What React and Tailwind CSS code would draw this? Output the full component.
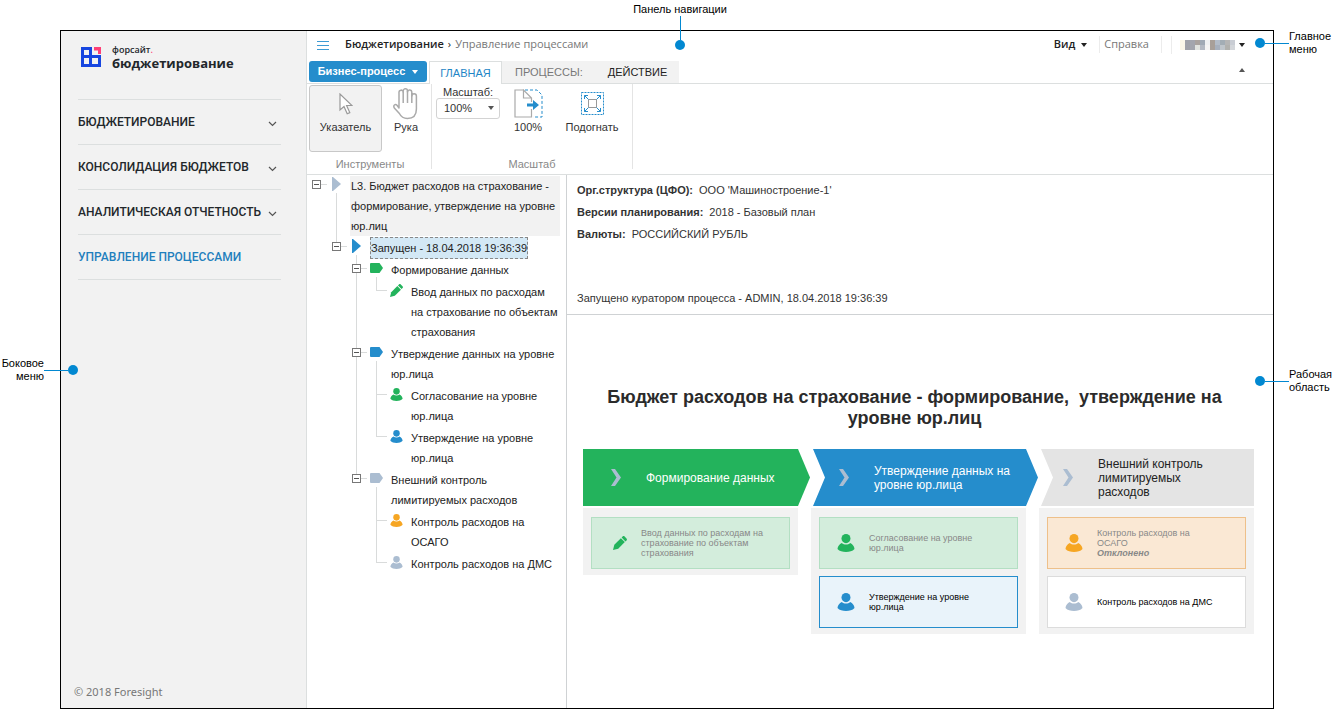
import { useState } from "react";

const NAV = [
  { title: "БЮДЖЕТИРОВАНИЕ", expandable: true },
  { title: "КОНСОЛИДАЦИЯ БЮДЖЕТОВ", expandable: true },
  { title: "АНАЛИТИЧЕСКАЯ ОТЧЕТНОСТЬ", expandable: true },
  { title: "УПРАВЛЕНИЕ ПРОЦЕССАМИ", expandable: false },
];

// guides: "line" / "none" for every ancestor column left of the node's own cell
const TREE = [
  { id: 1, guides: [], own: "toggle", icon: "play", color: "text-[#abbdd1]", text: "L3. Бюджет расходов на страхование - формирование, утверждение на уровне юр.лиц", parent: true, shaded: true, last: true },
  { id: 2, guides: ["none"], own: "toggle", icon: "play", color: "text-[#258dcc]", text: "Запущен - 18.04.2018 19:36:39", parent: true, selected: true, last: true },
  { id: 3, guides: ["none", "none"], own: "toggle", icon: "stage", color: "text-[#23b35c]", text: "Формирование данных", parent: true },
  { id: 4, guides: ["none", "none", "line"], own: "branch", icon: "pencil", color: "text-[#23b35c]", text: "Ввод данных по расходам на страхование по объектам страхования", last: true },
  { id: 5, guides: ["none", "none"], own: "toggle", icon: "stage", color: "text-[#258dcc]", text: "Утверждение данных на уровне юр.лица", parent: true },
  { id: 6, guides: ["none", "none", "line"], own: "branch", icon: "user", color: "text-[#23b35c]", text: "Согласование на уровне юр.лица" },
  { id: 7, guides: ["none", "none", "line"], own: "branch", icon: "user", color: "text-[#258dcc]", text: "Утверждение на уровне юр.лица", last: true },
  { id: 8, guides: ["none", "none"], own: "toggle", icon: "stage", color: "text-[#abbdd1]", text: "Внешний контроль лимитируемых расходов", parent: true, last: true },
  { id: 9, guides: ["none", "none", "none"], own: "branch", icon: "user", color: "text-[#f6a623]", text: "Контроль расходов на ОСАГО" },
  { id: 10, guides: ["none", "none", "none"], own: "branch", icon: "user", color: "text-[#abbdd1]", text: "Контроль расходов на ДМС", last: true },
];

const PARAMS = [
  ["Орг.структура (ЦФО):", "ООО 'Машиностроение-1'"],
  ["Версии планирования:", "2018 - Базовый план"],
  ["Валюты:", "РОССИЙСКИЙ РУБЛЬ"],
];

function Caret({ className = "" }) {
  return (
    <svg width="6" height="4" viewBox="0 0 6 4" className={className} fill="currentColor" aria-hidden="true">
      <path d="M0 0h6L3 4z" />
    </svg>
  );
}

function UserIcon({ size = 13 }) {
  return (
    <svg width={size} height={size} viewBox="0 0 17 18" fill="currentColor" aria-hidden="true">
      <ellipse cx="8.500" cy="4.600" rx="4.500" ry="4.600" />
      <path d="M4.300 8.900c1.200 1 2.600 1.500 4.200 1.500s3-.5 4.200-1.500c2.400 1.100 4.100 3.200 4.300 6.100C15 17.200 12 18 8.500 18S2 17.200 0 15c.2-2.900 1.900-5 4.300-6.100z" />
    </svg>
  );
}

function PencilIcon({ size = 13 }) {
  return (
    <svg width={size} height={size} viewBox="0 0 14 14" fill="currentColor" aria-hidden="true">
      <path d="M0 14l1.300-5.200L7.900 2.200l3.900 3.900-6.600 6.600z" />
      <path d="M8.600 1.500l1-1c.6-.6 1.400-.6 2 0l1.900 1.900c.6.6.6 1.400 0 2l-1 1z" />
    </svg>
  );
}

function NodeIcon({ name }) {
  if (name === "user") return <UserIcon />;
  if (name === "pencil") return <PencilIcon />;
  if (name === "stage") {
    return (
      <svg width="13" height="10" viewBox="0 0 13 10" fill="currentColor" aria-hidden="true">
        <path d="M1 0h8.500L13 5l-3.500 5H1a1 1 0 0 1-1-1V1a1 1 0 0 1 1-1z" />
      </svg>
    );
  }
  return (
    <svg width="9" height="14" viewBox="0 0 9 14" fill="currentColor" aria-hidden="true">
      <path d="M0 0h1l8 7-8 7H0z" />
    </svg>
  );
}

function Logo() {
  return (
    <svg width="20" height="20" viewBox="0 0 20 20" aria-hidden="true">
      <path fill="#1746e0" fillRule="evenodd" d="M0 0h11v8h9v12H0zM3 3v5h5V3zM3 11v6h5v-6zM11 11v6h6v-6z" />
      <path fill="#ff4076" d="M13 0h7v7h-3V3.500h-4z" />
    </svg>
  );
}

function Sidebar() {
  return (
    <aside className="flex w-[246px] shrink-0 flex-col border-r border-[#dcdfdf] bg-[#f2f2f2]">
      <div className="flex h-[68px] items-start gap-[11px] pt-[13px] pl-5">
        <div className="pt-[3px]">
          <Logo />
        </div>
        <div className="font-['Open_Sans',sans-serif] text-[#22272b]">
          <div className="text-[9px] leading-3 font-semibold">
            форсайт<span className="text-[#ff4076]">.</span>
          </div>
          <div className="text-[13px] leading-[14px] font-bold">бюджетирование</div>
        </div>
      </div>
      <nav className="mr-[25px] ml-[17px] border-b border-[#dcdfdf]">
        {NAV.map((item) => (
          <a
            key={item.title}
            href="#"
            className={`flex h-[45px] items-center justify-between border-t border-[#dcdfdf] pr-1 font-[Roboto,sans-serif] text-[12px] font-medium ${
              item.expandable ? "text-[#22272b]" : "text-[#1f7fbd]"
            }`}
          >
            {item.title}
            {item.expandable && (
              <svg width="9" height="6" viewBox="0 0 9 6" fill="none" stroke="#555" strokeWidth="1.200" className="mt-1" aria-hidden="true">
                <path d="M1 1l3.500 3.500L8 1" />
              </svg>
            )}
          </a>
        ))}
      </nav>
      <p className="mt-auto pb-2 pl-[13px] font-['Noto_Sans',sans-serif] text-[11px] leading-4 text-[#777]">© 2018 Foresight</p>
    </aside>
  );
}

// User name is masked with a mosaic
const MOSAIC = [
  ["bg-[#fbf7e8]", "bg-[#a0a2a8]", "bg-[#a3a5ae]", "bg-[#a9a29f]", "bg-[#9fa9b5]", "bg-[#eef0f2]", "bg-[#a89f98]", "bg-[#b3bcc8]", "bg-[#a3adb5]", "bg-[#b5b5b5]", "bg-[#c9cdd4]"],
  ["bg-[#fbf7e8]", "bg-[#a0a2a8]", "bg-[#a3a5ae]", "bg-[#e1e3e0]", "bg-[#b3b9c3]", "bg-[#f4f4f4]", "bg-[#a89f98]", "bg-[#a7b0bd]", "bg-[#bfc5cb]", "bg-[#b1b1ae]", "bg-[#d3d6da]"],
];

function HeaderBar() {
  return (
    <header className="flex h-[30px] items-center pr-7 pb-[3px] pl-[10px] font-['Open_Sans',sans-serif] text-[11px] text-[#222]">
      <button type="button" aria-label="Меню" className="flex w-3 flex-col gap-[3px] pt-[2px]">
        <span className="h-px bg-[#3d9bd4]" />
        <span className="h-px bg-[#3d9bd4]" />
        <span className="h-px bg-[#3d9bd4]" />
      </button>
      <div className="ml-4 flex items-center gap-1">
        <a href="#" className="font-semibold">Бюджетирование</a>
        <span>›</span>
        <span className="text-[#777]">Управление процессами</span>
      </div>
      <div className="ml-auto flex items-center">
        <button type="button" className="flex items-center gap-[6px] pr-3 font-semibold">
          Вид <Caret />
        </button>
        <a href="#" className="border-x border-[#ececec] pr-3 pl-1 text-[#777]">Справка</a>
        <button type="button" aria-label="Пользователь" className="ml-[9px] flex items-center gap-1 border-l border-[#ececec] py-1 pl-2">
          <span className="flex flex-col">
            {MOSAIC.map((row, i) => (
              <span key={i} className="flex">
                {row.map((c, j) => (
                  <span key={j} className={`h-[5px] w-[5px] ${c}`} />
                ))}
              </span>
            ))}
          </span>
          <Caret />
        </button>
      </div>
    </header>
  );
}

function Tabs() {
  return (
    <div className="flex h-[23px] items-stretch border-b border-[#dcdfdf] pl-[2px] text-[11px]">
      <button type="button" className="mb-px flex w-[118px] items-center justify-center gap-[7px] rounded-[3px] bg-[#258dcc] text-[11px] font-bold text-white">
        Бизнес-процесс <Caret />
      </button>
      <div role="tablist" className="ml-[2px] flex">
        <button type="button" role="tab" aria-selected="true" className="-mb-px w-[73px] border-x border-t border-[#dcdfdf] bg-white text-[#1f86c6]">ГЛАВНАЯ</button>
        <button type="button" role="tab" className="bg-[#f2f2f2] px-[13px] text-[#777]">ПРОЦЕССЫ:</button>
        <button type="button" role="tab" className="bg-[#f2f2f2] px-3 text-[#222]">ДЕЙСТВИЕ</button>
      </div>
      <button type="button" aria-label="Свернуть ленту" className="mr-7 ml-auto pb-1 text-[#555]">
        <Caret className="rotate-180" />
      </button>
    </div>
  );
}

function Ribbon() {
  const [zoom, setZoom] = useState("100%");
  return (
    <div className="flex h-[91px] border-b border-[#dcdfdf] text-[11px] text-[#333]">
      <section className="mb-[5px] flex w-[125px] flex-col border-r border-[#e4e4e4] pt-px pl-[2px]">
        <div className="flex">
          <button type="button" className="flex h-[67px] w-[73px] flex-col items-center rounded-[3px] border border-[#c8c8c8] bg-[#f2f2f2] pt-[7px]">
            <svg width="14" height="22" viewBox="0 0 14 22" fill="#fff" stroke="#999" strokeWidth="1.200" aria-hidden="true">
              <path d="M1 1v16l4-3.500 3.200 7.300 2.600-1.200L7.600 12.500H13z" />
            </svg>
            <span className="mt-[6px] leading-3">Указатель</span>
          </button>
          <button type="button" className="flex h-[67px] w-12 flex-col items-center pt-[3px]">
            <svg width="26" height="32" viewBox="0 0 26 32" fill="#fff" stroke="#aaa" strokeWidth="1.500" strokeLinejoin="round" aria-hidden="true">
              <path d="M6 20V4.500a2.100 2.100 0 0 1 4.200-.5V3a2.100 2.100 0 0 1 4.300 0v1a2.100 2.100 0 0 1 4.300.5V8a2.300 2.300 0 0 1 4.600 0v13c0 6-3 9.500-9 9.500-5 0-6.500-2-8-5L1.300 20c-1.500-2.800 1-4.300 2.700-2.700z" />
              <path fill="none" d="M10.200 4v11M14.500 3v12M18.800 5v10" />
            </svg>
            <span className="mt-px leading-3">Рука</span>
          </button>
        </div>
        <h3 className="mt-auto text-center leading-[10px] text-[#888]">Инструменты</h3>
      </section>
      <section className="mb-[5px] flex w-[201px] flex-col border-r border-[#e4e4e4] px-1 pt-[2px]">
        <div className="flex">
          <div className="w-16">
            <label htmlFor="zoom" className="block text-center leading-3">Масштаб:</label>
            <div className="relative">
              <select
                id="zoom"
                value={zoom}
                onChange={(e) => setZoom(e.target.value)}
                className="h-[21px] w-16 appearance-none rounded-[3px] border border-[#d3d3d3] bg-white pl-[7px] text-[11px]"
              >
                <option>50%</option>
                <option>100%</option>
                <option>200%</option>
              </select>
              <Caret className="pointer-events-none absolute top-2 right-[6px] text-[#555]" />
            </div>
          </div>
          <button type="button" className="ml-2 flex w-10 flex-col items-center pt-[3px]">
            <svg width="29" height="29" viewBox="0 0 29 29" fill="none" aria-hidden="true">
              <path stroke="#aaa" strokeWidth="1.200" d="M9.500 1H1v27h16.500v-8M17.500 13V9L9.500 1v8h8" />
              <path stroke="#258dcc" strokeDasharray="3 2" d="M11 1h12l5 5v22H19" />
              <path fill="#258dcc" d="M13 14.500h6V11l6 5-6 5v-3.500h-6z" />
            </svg>
            <span className="mt-[3px] leading-3">100%</span>
          </button>
          <button type="button" className="ml-3 flex w-[64px] flex-col items-center pt-[6px]">
            <svg width="23" height="23" viewBox="0 0 23 23" fill="none" stroke="#258dcc" aria-hidden="true">
              <path strokeDasharray="2 1" d="M.5.5h22v22H.500z" />
              <path stroke="#999" d="M7.500 7.500h8v8h-8z" />
              <path d="M3.500 7V3.500H7M16 3.500h3.500V7M19.500 16v3.500H16M7 19.500H3.500V16M3.500 3.500l4 4M19.500 3.500l-4 4M19.500 19.500l-4-4M3.500 19.500l4-4" />
            </svg>
            <span className="mt-[6px] leading-3">Подогнать</span>
          </button>
        </div>
        <h3 className="mt-auto text-center leading-[10px] text-[#888]">Масштаб</h3>
      </section>
    </div>
  );
}

function OwnCell({ node }) {
  if (node.own === "branch") {
    return (
      <span className="flex w-5 shrink-0 flex-col pl-[9px]">
        <span className="h-[10px] w-[11px] shrink-0 border-b border-l border-[#d9dbdb]" />
        {!node.last && <span className="w-px flex-1 bg-[#d9dbdb]" />}
      </span>
    );
  }
  return (
    <span className="flex w-5 shrink-0 flex-col pl-[5px]">
      <span className={`ml-1 h-[5px] w-px shrink-0 ${node.id > 1 ? "bg-[#d9dbdb]" : ""}`} />
      <span className="flex items-center">
        <button type="button" aria-label="Свернуть" className="flex size-[9px] shrink-0 items-center justify-center border border-[#777] bg-white">
          <span className="h-px w-[5px] bg-[#555]" />
        </button>
        <span className="h-px w-[6px] shrink-0 bg-[#d9dbdb]" />
      </span>
      {!node.last && <span className="ml-1 w-px flex-1 bg-[#d9dbdb]" />}
    </span>
  );
}

function TreeNode({ node }) {
  let box = "my-px px-px";
  if (node.shaded) box = "my-px flex-1 bg-[#f2f2f2] px-px";
  if (node.selected) box = "border border-dashed border-[#888] bg-[#d3e8f5]";
  return (
    <li className="flex">
      {node.guides.map((g, i) => (
        <span key={i} className="flex w-5 shrink-0 pl-[9px]">
          {g === "line" && <span className="w-px bg-[#d9dbdb]" />}
        </span>
      ))}
      <OwnCell node={node} />
      <span className="flex w-5 shrink-0 flex-col">
        <span className={`flex h-[18px] shrink-0 items-center justify-center pr-px ${node.color}`}>
          <NodeIcon name={node.icon} />
        </span>
        {node.parent && <span className="ml-[9px] w-px flex-1 bg-[#d9dbdb]" />}
      </span>
      <span className={`ml-[3px] leading-5 ${box}`}>{node.text}</span>
    </li>
  );
}

function Stage({ title, tone, shape, children }) {
  return (
    <div>
      <div className={`flex h-[57px] items-center text-[12px] leading-[14px] ${tone} ${shape}`}>
        <svg width="10" height="17" viewBox="0 0 10 17" className="shrink-0 fill-[#abbdd1]" aria-hidden="true">
          <path d="M0 0h4L10 8.500 4 17H0l5.500-8.500z" />
        </svg>
        <h3>{title}</h3>
      </div>
      <div className="mt-[2px] flex flex-col gap-[7px] bg-[#f2f2f2] px-2 pt-[9px] pb-[6px]">{children}</div>
    </div>
  );
}

function StepCard({ tone, iconColor, pencil, children }) {
  return (
    <div className={`flex h-[52px] items-center border text-[9px] leading-[10px] ${tone}`}>
      <span className={`flex w-[49px] shrink-0 justify-end pr-[14px] ${iconColor}`}>
        {pencil ? <PencilIcon size={14} /> : <UserIcon size={18} />}
      </span>
      <p className="pr-[26px]">{children}</p>
    </div>
  );
}

function Workspace() {
  return (
    <main className="min-w-0 flex-1">
      <div className="flex h-[140px] flex-col border-b border-[#cfd2d4] pt-1 pl-[10px] text-[11px] leading-[22px] text-[#333]">
        {PARAMS.map(([label, value]) => (
          <p key={label}>
            <b className="mr-[6px]">{label}</b>
            {value}
          </p>
        ))}
        <p className="mt-[42px]">Запущено куратором процесса - ADMIN, 18.04.2018 19:36:39</p>
      </div>
      <div className="pt-[72px] pr-[19px] pl-4">
        <h2 className="pr-7 pl-5 text-center text-[18px] leading-[21px] font-bold text-[#2b2b2b]">
          Бюджет расходов на страхование - формирование,&nbsp; утверждение на уровне юр.лиц
        </h2>
        <div className="mt-5 grid grid-cols-3 items-start gap-[13px]">
          <Stage
            title="Формирование данных"
            tone="bg-[#23b35c] text-white"
            shape="-mr-3 gap-[25px] pr-4 pl-7 [clip-path:polygon(0_0,calc(100%-12px)_0,100%_50%,calc(100%-12px)_100%,0_100%)]"
          >
            <StepCard tone="border-[#b3dfc3] bg-[#d3eddc] text-[#888]" iconColor="text-[#23b35c]" pencil>
              Ввод данных по расходам на страхование по объектам страхования
            </StepCard>
          </Stage>
          <Stage
            title="Утверждение данных на уровне юр.лица"
            tone="bg-[#258dcc] text-white"
            shape="-mr-3 ml-[2px] gap-[25px] pr-4 pl-[26px] [clip-path:polygon(0_0,calc(100%-12px)_0,100%_50%,calc(100%-12px)_100%,0_100%,12px_50%)]"
          >
            <StepCard tone="border-[#b3dfc3] bg-[#d3eddc] text-[#888]" iconColor="text-[#23b35c]">
              Согласование на уровне юр.лица
            </StepCard>
            <StepCard tone="border-[#258dcc] bg-[#e9f3fa] text-black" iconColor="text-[#258dcc]">
              Утверждение на уровне юр.лица
            </StepCard>
          </Stage>
          <Stage
            title="Внешний контроль лимитируемых расходов"
            tone="bg-[#e4e4e4] text-[#222]"
            shape="ml-[2px] gap-[25px] pr-8 pl-[22px] [clip-path:polygon(0_0,100%_0,100%_100%,0_100%,12px_50%)]"
          >
            <StepCard tone="border-[#eec08a] bg-[#fae8d4] text-[#888]" iconColor="text-[#f6a623]">
              Контроль расходов на ОСАГО
              <b className="block italic">Отклонено</b>
            </StepCard>
            <StepCard tone="border-[#dcdcdc] bg-white text-black" iconColor="text-[#abbdd1]">
              Контроль расходов на ДМС
            </StepCard>
          </Stage>
        </div>
      </div>
    </main>
  );
}

function Dot() {
  return <span className="size-[10px] shrink-0 rounded-full bg-[#0288d1]" />;
}

function Callouts() {
  return (
    <div className="text-[11px] leading-[13px] text-black">
      <div className="absolute top-[3px] left-[632px] flex w-24 flex-col items-center">
        <span className="whitespace-nowrap">Панель навигации</span>
        <span className="h-6 w-px bg-[#0288d1]" />
        <Dot />
      </div>
      <div className="absolute top-[357px] left-0 flex items-center">
        <span className="w-[44px] text-right">Боковое меню</span>
        <span className="h-px w-6 bg-[#0288d1]" />
        <Dot />
      </div>
      <div className="absolute top-[30px] right-0 flex items-center">
        <Dot />
        <span className="h-px w-6 bg-[#0288d1]" />
        <span className="w-[46px]">Главное меню</span>
      </div>
      <div className="absolute top-[368px] right-0 flex items-center">
        <Dot />
        <span className="h-px w-6 bg-[#0288d1]" />
        <span className="w-[46px]">Рабочая область</span>
      </div>
    </div>
  );
}

export default function App() {
  return (
    <div className="relative flex min-h-screen bg-white pt-[30px] pr-[61px] pb-[9px] pl-[60px] font-['Liberation_Sans',Arial,sans-serif]">
      <div className="flex flex-1 border border-black">
        <Sidebar />
        <div className="flex min-w-0 flex-1 flex-col">
          <HeaderBar />
          <Tabs />
          <Ribbon />
          <div className="flex flex-1">
            <ul className="w-[260px] shrink-0 border-r border-[#cfd2d4] pr-[6px] text-[11px] text-[#222]">
              {TREE.map((node) => (
                <TreeNode key={node.id} node={node} />
              ))}
            </ul>
            <Workspace />
          </div>
        </div>
      </div>
      <Callouts />
    </div>
  );
}
